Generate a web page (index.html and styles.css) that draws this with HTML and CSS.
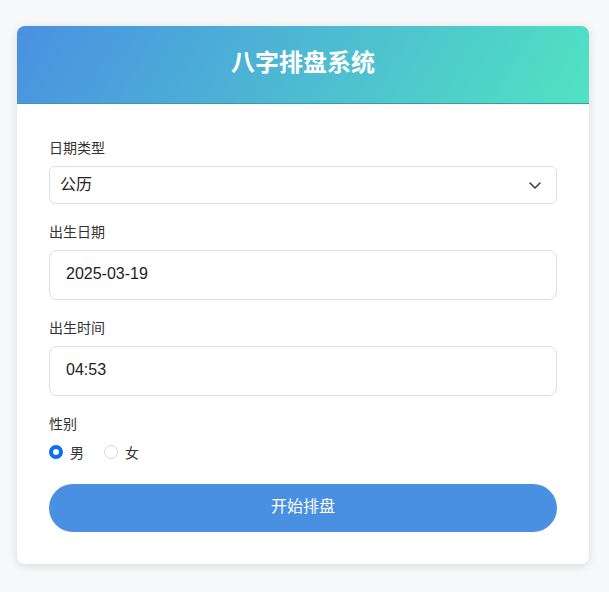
FILE: index.html
```html
<!DOCTYPE html>
<html lang="zh">
<head>
<meta charset="utf-8">
<title>八字排盘系统</title>
<link rel="stylesheet" href="styles.css">
</head>
<body>
<div class="card">
  <div class="card-header"><h1 class="title">八字排盘系统</h1></div>
  <form class="card-body">
    <div class="group">
      <label class="label">日期类型</label>
      <div class="select">
        <span>公历</span>
        <svg class="chev" width="12" height="7" viewBox="0 0 12 7"><path d="M1 1l5 5 5-5" fill="none" stroke="#343a40" stroke-width="1.5" stroke-linecap="round" stroke-linejoin="round"/></svg>
      </div>
    </div>
    <div class="group">
      <label class="label">出生日期</label>
      <div class="input">2025-03-19</div>
    </div>
    <div class="group">
      <label class="label">出生时间</label>
      <div class="input">04:53</div>
    </div>
    <div class="group gender">
      <label class="label">性别</label>
      <div class="radios">
        <label class="radio"><span class="dot checked"></span>男</label>
        <label class="radio"><span class="dot"></span>女</label>
      </div>
    </div>
    <button type="button" class="btn">开始排盘</button>
  </form>
</div>
</body>
</html>
```
FILE: styles.css
```css
html, body { margin: 0; padding: 0; }
body {
  background: #f7f8fa;
  font-family: "Liberation Sans", "Noto Sans CJK SC", sans-serif;
  color: #333;
  padding: 26px 20px 20px 17px;
}
.card {
  background: #fff;
  border-radius: 8px;
  box-shadow: 0 2px 10px rgba(0,0,0,0.12);
  overflow: hidden;
}
.card-header {
  height: 77px;
  background: linear-gradient(120deg, #4a90e2 0%, #50e3c2 100%);
  border-bottom: 1px solid #3a9aa8;
  display: flex;
  align-items: center;
  justify-content: center;
}
.title {
  margin: 0;
  color: #fff;
  font-size: 24px;
  font-weight: bold;
  margin-top: -9px;
}
.card-body {
  padding: 34px 32px 32px;
}
.group { margin-bottom: 18px; }
.label {
  display: block;
  font-size: 14px;
  line-height: 20px;
  margin-bottom: 8px;
  color: #333;
}
.select {
  height: 38px;
  box-sizing: border-box;
  border: 1px solid #dcdfe4;
  border-radius: 6px;
  display: flex;
  align-items: center;
  justify-content: space-between;
  padding: 0 15px 4px 10px;
  font-size: 16px;
  color: #222;
}
.chev { margin-top: 4px; }
.input {
  height: 50px;
  box-sizing: border-box;
  border: 1px solid #dcdfe4;
  border-radius: 8px;
  display: flex;
  align-items: center;
  padding: 0 16px 2px;
  font-size: 16px;
  color: #222;
}
.gender { margin-bottom: 22px; }
.gender .label { margin-bottom: 8px; }
.radios { display: flex; gap: 20px; font-size: 14px; }
.radio { display: flex; align-items: center; gap: 7px; color: #333; }
.dot {
  width: 14px; height: 14px;
  box-sizing: border-box;
  border-radius: 50%;
  border: 1px solid #d5d8dc;
  background: #fff;
}
.dot.checked {
  border: 4px solid #0b6ef5;
}
.btn {
  display: block;
  width: 100%;
  height: 48px;
  border: none;
  border-radius: 24px;
  background: #4a90e2;
  color: #fff;
  font-size: 16px;
  font-family: inherit;
  padding-bottom: 7px;
}
```
